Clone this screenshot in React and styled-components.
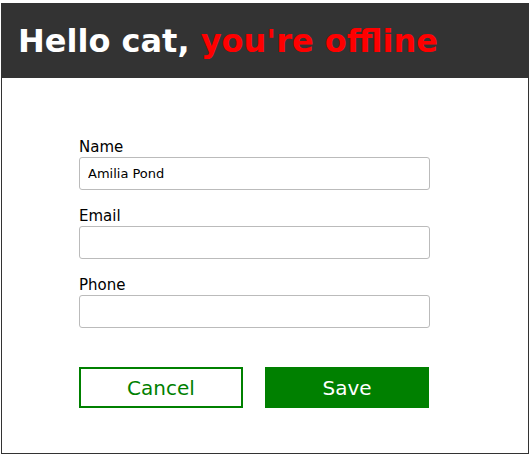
import React from "react";
import styled, { createGlobalStyle } from "styled-components";

const Global = createGlobalStyle`
  html, body { margin: 0; padding: 0; background: #fff; }
  body { font-family: "DejaVu Sans", sans-serif; }
`;

const Frame = styled.div`
  box-sizing: border-box;
  width: 528px;
  height: 451px;
  margin: 3px 0 0 1px;
  border: 1px solid #333;
  display: flex;
  flex-direction: column;
`;

const Header = styled.header`
  height: 74px;
  background: #333;
  display: flex;
  align-items: center;
  padding: 1px 17px 0;
  margin: -1px -1px 0;
`;

const Title = styled.h1`
  margin: 0;
  font-size: 32px;
  font-weight: bold;
  color: #fff;
`;

const Offline = styled.span`
  color: #ff0000;
`;

const Form = styled.form`
  display: flex;
  flex-direction: column;
  width: 351px;
  margin: 61px 0 0 77px;
`;

const Field = styled.div`
  display: flex;
  flex-direction: column;
  gap: 2px;
  margin-bottom: 18px;
`;

const Label = styled.label`
  font-size: 15px;
  line-height: 16px;
  color: #000;
`;

const Input = styled.input`
  box-sizing: border-box;
  height: 33px;
  width: 351px;
  border: 1px solid #bbb;
  border-radius: 3px;
  padding: 0 8px;
  font-family: "DejaVu Sans", sans-serif;
  font-size: 13px;
  color: #000;
  outline: none;
`;

const Actions = styled.div`
  display: flex;
  gap: 22px;
  margin-top: 21px;
`;

const Button = styled.button`
  box-sizing: border-box;
  width: 164px;
  height: 41px;
  font-family: "DejaVu Sans", sans-serif;
  font-size: 20px;
  border: 2px solid #008000;
  background: ${(p) => (p.$primary ? "#008000" : "#fff")};
  color: ${(p) => (p.$primary ? "#fff" : "#008000")};
  cursor: pointer;
  padding: 0;
`;

export default function App() {
  return (
    <>
      <Global />
      <Frame>
        <Header>
          <Title>
            Hello cat, <Offline>you're offline</Offline>
          </Title>
        </Header>
        <Form onSubmit={(e) => e.preventDefault()}>
          <Field>
            <Label htmlFor="name">Name</Label>
            <Input id="name" defaultValue="Amilia Pond" />
          </Field>
          <Field>
            <Label htmlFor="email">Email</Label>
            <Input id="email" />
          </Field>
          <Field>
            <Label htmlFor="phone">Phone</Label>
            <Input id="phone" />
          </Field>
          <Actions>
            <Button type="button">Cancel</Button>
            <Button type="submit" $primary>
              Save
            </Button>
          </Actions>
        </Form>
      </Frame>
    </>
  );
}
